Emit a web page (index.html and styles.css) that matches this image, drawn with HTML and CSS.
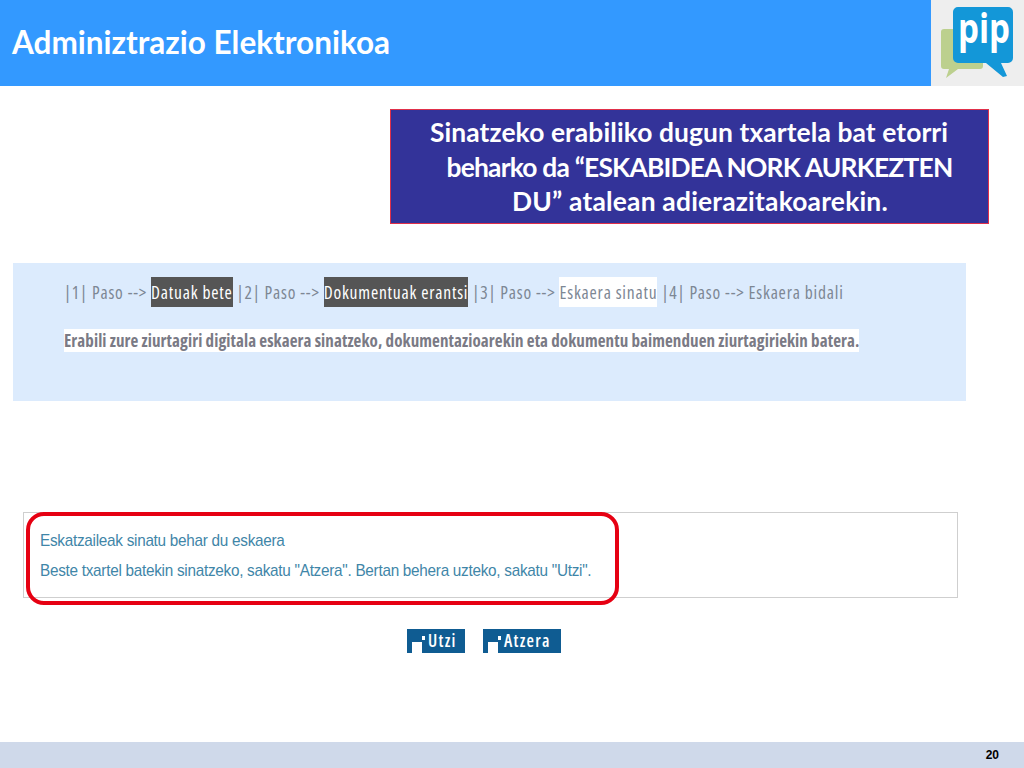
FILE: index.html
```html
<!DOCTYPE html>
<html lang="eu">
<head>
<meta charset="utf-8">
<title>Administrazio Elektronikoa</title>
<link rel="stylesheet" href="styles.css">
</head>
<body>
<div class="slide">
  <header class="header">
    <h1 class="title">Adminiztrazio Elektronikoa</h1>
    <div class="logo">
      <svg width="93" height="86" viewBox="0 0 93 86" aria-hidden="true">
        <path d="M13 29h36a3 3 0 0 1 3 3v34a3 3 0 0 1-3 3H27L15 78l3-9h-5a3 3 0 0 1-3-3V32a3 3 0 0 1 3-3z" fill="#bcd08e"/>
        <path d="M27 7h50a5 5 0 0 1 5 5v46a5 5 0 0 1-5 5h-7l6 13-4 1-17-14H27a5 5 0 0 1-5-5V12a5 5 0 0 1 5-5z" fill="#1397d8"/>
        <text x="27" y="43" class="logo-text" textLength="52" lengthAdjust="spacingAndGlyphs">pip</text>
      </svg>
    </div>
  </header>
  <section class="callout">
    <p class="callout-line first">Sinatzeko erabiliko dugun txartela bat etorri</p>
    <p class="callout-line second">beharko da “ESKABIDEA NORK AURKEZTEN</p>
    <p class="callout-line third">DU” atalean adierazitakoarekin.</p>
  </section>
  <section class="steps">
    <p class="steps-line"><span>|1| Paso --&gt; </span><span class="done">Datuak bete</span><span> |2| Paso --&gt; </span><span class="done">Dokumentuak erantsi</span><span> |3| Paso --&gt; </span><span class="current">Eskaera sinatu</span><span> |4| Paso --&gt; Eskaera bidali</span></p>
    <p class="steps-note"><span>Erabili zure ziurtagiri digitala eskaera sinatzeko, dokumentazioarekin eta dokumentu baimenduen ziurtagiriekin batera.</span></p>
  </section>
  <section class="message">
    <p>Eskatzaileak sinatu behar du eskaera</p>
    <p>Beste txartel batekin sinatzeko, sakatu "Atzera". Bertan behera uzteko, sakatu "Utzi".</p>
    <div class="highlight"></div>
  </section>
  <div class="buttons">
    <a class="btn btn-utzi"><i class="btn-icon"></i>Utzi</a>
    <a class="btn btn-atzera"><i class="btn-icon"></i>Atzera</a>
  </div>
  <footer class="footer"><span class="page">20</span></footer>
</div>
</body>
</html>
```
FILE: styles.css
```css
* { box-sizing: border-box; }
html, body { margin: 0; padding: 0; background: #fff; }
p, h1 { margin: 0; }
.slide { width: 1024px; height: 768px; display: flex; flex-direction: column; overflow: hidden; }

.header { height: 86px; flex: none; display: flex; background: #3399ff; }
.title { flex: 1; padding: 24px 0 0 12px; font: 700 31.5px/36px Lato, "Open Sans", sans-serif; color: #fff; }
.logo { width: 93px; background: #eeeeee; }
.logo svg { display: block; }
.logo-text { font: 700 41px "Open Sans", sans-serif; fill: #fff; }

.callout { flex: none; width: 599px; height: 115px; margin: 23px 0 0 390px; padding-top: 5px; background: #333399; border: 1px solid #e0304a; text-align: center; color: #fff; font: 700 26.4px/34.5px Lato, "Open Sans", sans-serif; white-space: nowrap; }
.callout-line.first { padding-right: 1px; letter-spacing: 0.1px; }
.callout-line.second { padding-left: 20px; letter-spacing: -0.8px; }
.callout-line.third { padding-left: 21px; letter-spacing: 0.2px; }

.steps { flex: none; width: 953px; height: 138px; margin: 39px 0 0 13px; padding: 14px 0 0 51px; background: #dcebfd; font: 400 17.5px/30px "Open Sans", "Liberation Sans", sans-serif; font-stretch: 75%; color: #7d8794; letter-spacing: 0.8px; }
.steps-line { white-space: nowrap; }
.steps-line .done { display: inline-block; background: #555; color: #fff; }
.steps-line .current { display: inline-block; background: #fff; }
.steps-note { margin-top: 24px; line-height: 19px; white-space: nowrap; font-size: 17px; letter-spacing: 0.09px; }
.steps-note span { background: #fff; font-weight: 700; color: #7a7a85; }

.message { position: relative; flex: none; width: 935px; height: 86px; margin: 111px 0 0 23px; padding: 13px 0 0 16px; border: 1px solid #cfcfcf; font: 400 17px/30px "Liberation Sans", Arial, sans-serif; letter-spacing: -0.3px; color: #3f86a8; }
.message p { transform: scaleX(0.9); transform-origin: left center; white-space: nowrap; }
.highlight { position: absolute; left: 2px; top: -1px; width: 593px; height: 93px; border: 4px solid #e60012; border-radius: 18px; }

.buttons { flex: none; display: flex; margin: 31px 0 0 407px; gap: 18px; }
.btn { height: 24px; display: flex; align-items: center; background: #0f5c92; color: #fff; font: 600 17px/24px "Open Sans", "Liberation Sans", sans-serif; font-stretch: 75%; letter-spacing: 1.3px; }
.btn-utzi { width: 58px; }
.btn-atzera { width: 78px; }
.btn-icon { position: relative; flex: none; align-self: flex-end; width: 10px; height: 11px; margin: 0 6px 0 5px; background: #fff; }
.btn-icon::after { content: ""; position: absolute; left: 10px; top: -6px; width: 3px; height: 4px; background: #fff; }

.footer { flex: none; height: 26px; margin-top: 89px; background: #cfd9ea; display: flex; justify-content: flex-end; align-items: center; padding-right: 25px; }
.page { font: 700 12px/14px "Liberation Sans", Arial, sans-serif; color: #000; }
```
